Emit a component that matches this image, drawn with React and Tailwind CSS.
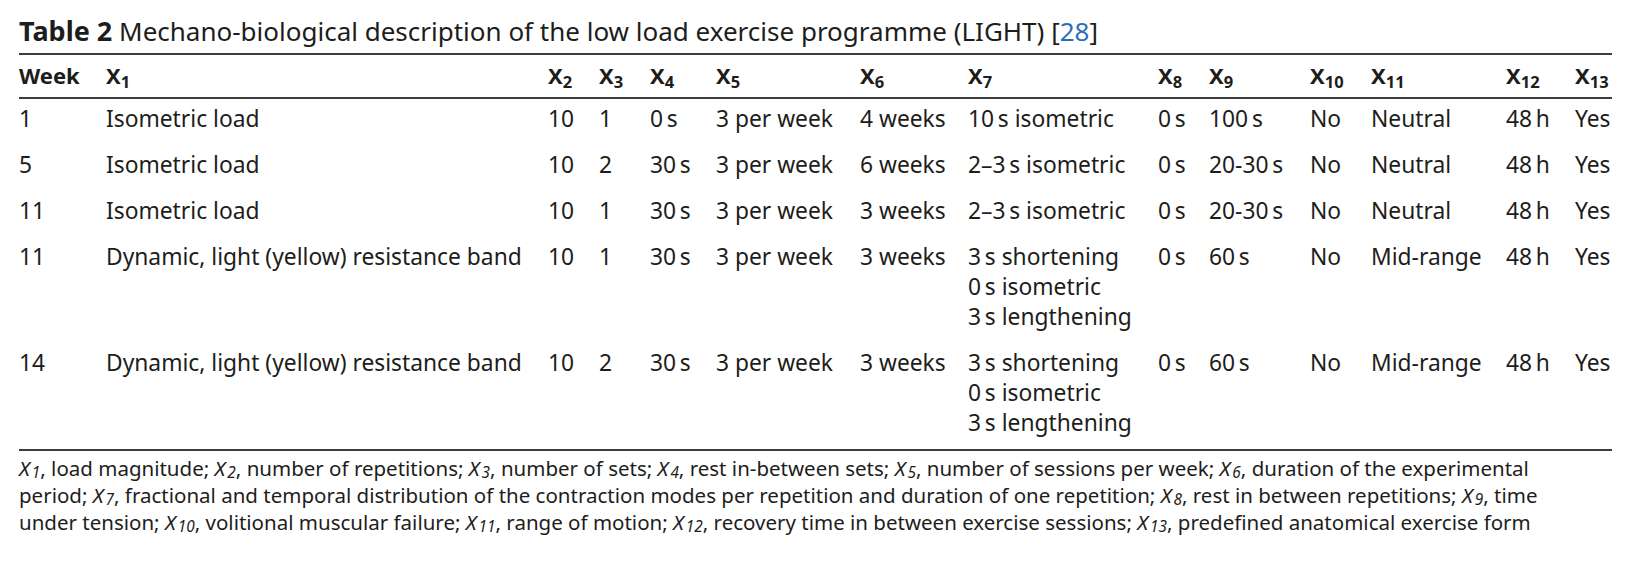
const cols = 'grid grid-cols-[87px_442px_51px_51px_66px_144px_108px_190px_51px_101px_61px_135px_69px_37px]'

const heads = ['1', '2', '3', '4', '5', '6', '7', '8', '9', '10', '11', '12', '13']

const band = ['3\u2009s shortening', '0\u2009s isometric', '3\u2009s lengthening']

const rows = [
  ['1', 'Isometric load', '10', '1', '0\u2009s', '3 per week', '4 weeks', ['10\u2009s isometric'], '0\u2009s', '100\u2009s', 'No', 'Neutral', '48\u2009h', 'Yes'],
  ['5', 'Isometric load', '10', '2', '30\u2009s', '3 per week', '6 weeks', ['2–3\u2009s isometric'], '0\u2009s', '20-30\u2009s', 'No', 'Neutral', '48\u2009h', 'Yes'],
  ['11', 'Isometric load', '10', '1', '30\u2009s', '3 per week', '3 weeks', ['2–3\u2009s isometric'], '0\u2009s', '20-30\u2009s', 'No', 'Neutral', '48\u2009h', 'Yes'],
  ['11', 'Dynamic, light (yellow) resistance band', '10', '1', '30\u2009s', '3 per week', '3 weeks', band, '0\u2009s', '60\u2009s', 'No', 'Mid-range', '48\u2009h', 'Yes'],
  ['14', 'Dynamic, light (yellow) resistance band', '10', '2', '30\u2009s', '3 per week', '3 weeks', band, '0\u2009s', '60\u2009s', 'No', 'Mid-range', '48\u2009h', 'Yes'],
]

function X({ n }) {
  return (
    <i>
      X<sub className="ml-[2px] bottom-[-0.15em]">{n}</sub>
    </i>
  )
}

export default function App() {
  return (
    <div className="w-[1642px] h-[568px] bg-white text-[#1d1d1b] font-['Noto_Sans',sans-serif] overflow-hidden">
      <div className="ml-[19px] w-[1593px] pt-[16px]">
        <h1 className="text-[26px] leading-[30px] whitespace-nowrap">
          <b className="text-[27px]">Table 2</b> Mechano-biological description of the low load exercise programme (LIGHT) [
          <span className="text-[#2a6ebb]">28</span>]
        </h1>

        <div className={`${cols} mt-[7px] border-t-2 border-b-2 border-[#3d3d3d] pt-[5px] pb-[7px] text-[22px] leading-[30px] font-bold`}>
          <div>Week</div>
          {heads.map(h => (
            <div key={h}>
              X<sub>{h}</sub>
            </div>
          ))}
        </div>

        <div className="border-b-2 border-[#3d3d3d] text-[22.8px] leading-[30px] whitespace-nowrap">
          {rows.map((r, i) => (
            <div key={i} className={`${cols} pt-[5px] pb-[11px]`}>
              {r.map((cell, j) =>
                Array.isArray(cell) ? (
                  <div key={j}>
                    {cell.map(line => (
                      <div key={line}>{line}</div>
                    ))}
                  </div>
                ) : (
                  <div key={j}>{cell}</div>
                )
              )}
            </div>
          ))}
        </div>

        <p className="pt-[4px] text-[20.5px] leading-[27px] whitespace-nowrap">
          <X n="1" />, load magnitude; <X n="2" />, number of repetitions; <X n="3" />, number of sets; <X n="4" />, rest
          in-between sets; <X n="5" />, number of sessions per week; <X n="6" />, duration of the experimental
          <br />
          period; <X n="7" />, fractional and temporal distribution of the contraction modes per repetition and duration of
          one repetition; <X n="8" />, rest in between repetitions; <X n="9" />, time
          <br />
          under tension; <X n="10" />, volitional muscular failure; <X n="11" />, range of motion; <X n="12" />, recovery
          time in between exercise sessions; <X n="13" />, predefined anatomical exercise form
        </p>
      </div>
    </div>
  )
}
